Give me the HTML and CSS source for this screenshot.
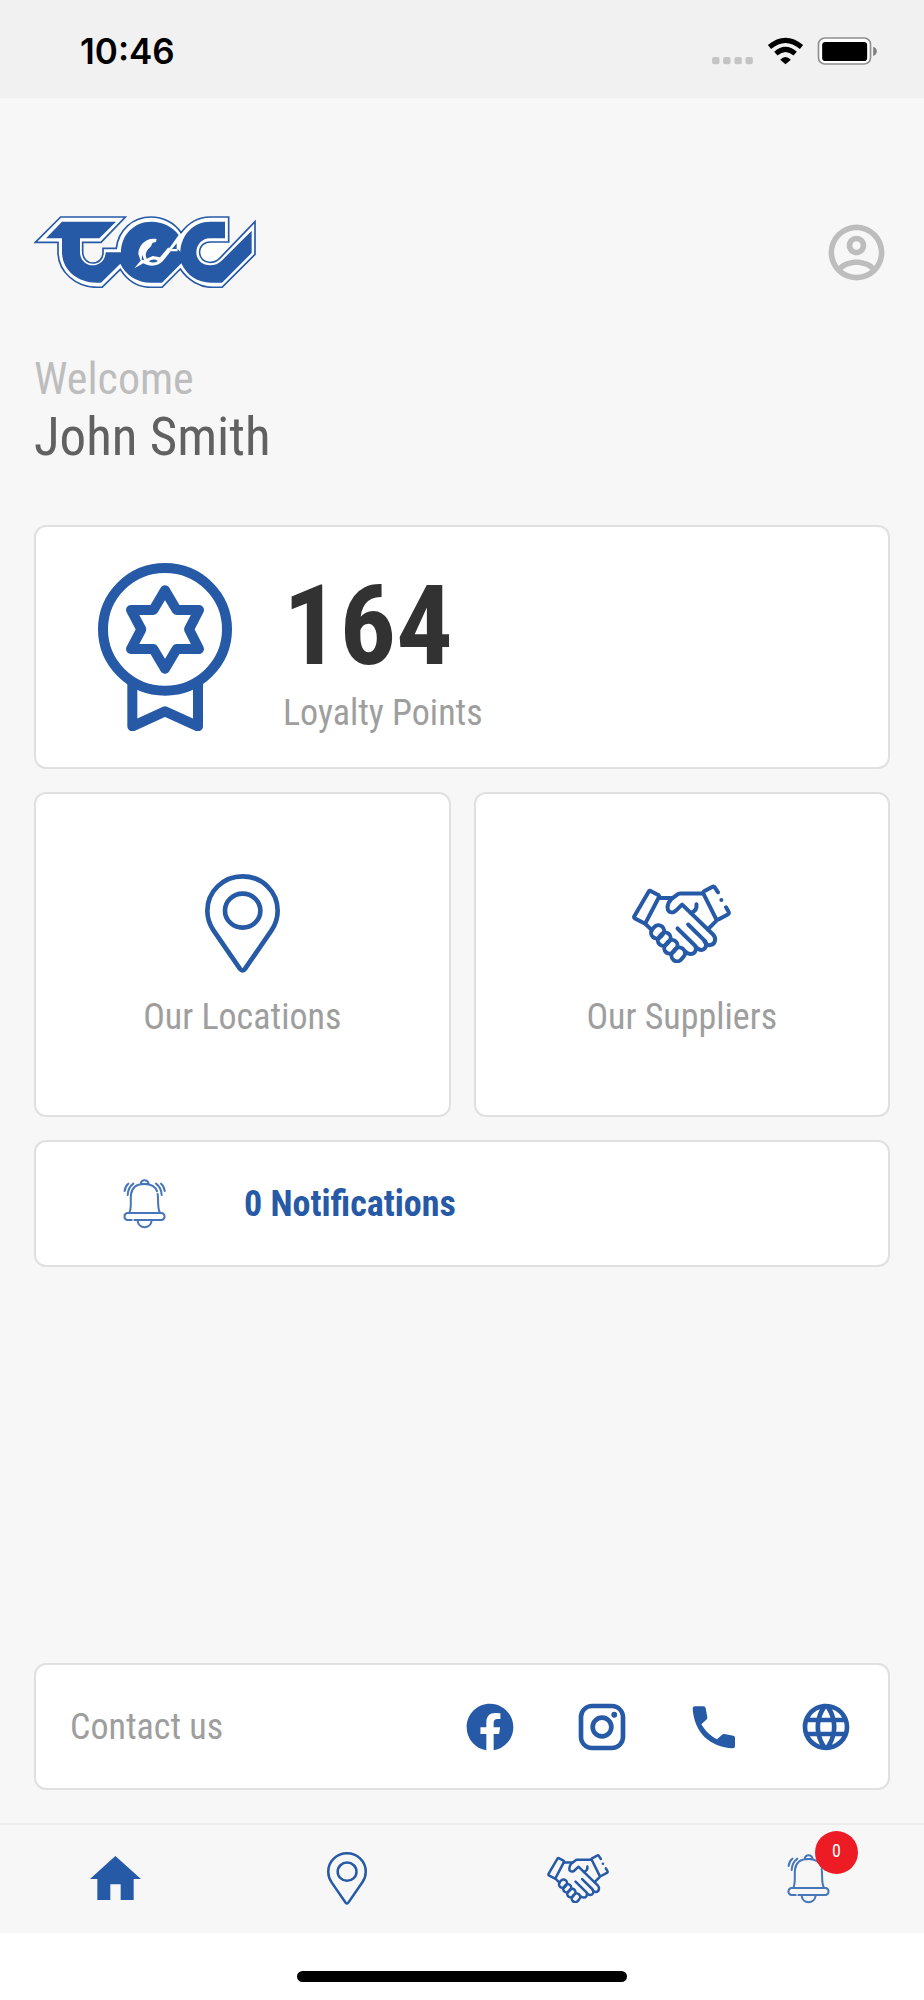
FILE: index.html
```html
<!DOCTYPE html>
<html lang="en">
<head>
<meta charset="utf-8">
<meta name="viewport" content="width=device-width, initial-scale=1">
<title>TEC Loyalty</title>
<link rel="stylesheet" href="styles.css">
</head>
<body>
<svg class="sprite" aria-hidden="true">
  <symbol id="pin" viewBox="0 0 225 297">
    <g fill="none" stroke="currentColor" stroke-width="14">
      <path d="M113 7C54 7 7 53 7 110C7 134 14 152 26 170L104 283Q113 295 121 283L199 170C211 152 218 134 218 110C218 53 171 7 113 7Z"/>
      <ellipse cx="113" cy="110" rx="53" ry="51"/>
    </g>
  </symbol>
  <symbol id="handshake" viewBox="215 106 298 236">
    <g fill="none" stroke="currentColor" stroke-width="12" stroke-linecap="round" stroke-linejoin="round">
      <path d="M266 127Q268 125 271 126L294 138Q298 141 296 145L257 220Q254 225 249 222L224 209Q220 206 222 202Z"/>
      <path d="M300 147H337M255 225L275 244"/>
      <path d="M427 134H360Q355 134 350 138L334 150Q322 162 322 176C322 188 330 192 339 190C350 187 356 174 366 167L459 257C470 268 466 287 450 289C443 290 438 286 433 278"/>
      <path d="M409 166C411 180 404 188 392 192"/>
      <path d="M474 130L464 115Q461 111 456 114L432 127Q428 130 430 134L468 210Q471 214 475 212L503 197Q508 194 506 189L498 175M468 217L444 241"/>
      <path d="M384 227L435 277C443 291 435 303 424 304C415 304 411 299 406 292M352 239L405 291C411 304 404 316 391 316Q382 315 376 309"/>
      <rect x="-21" y="-17" width="42" height="34" rx="17" transform="translate(292 249) rotate(-50)"/>
      <rect x="-21" y="-16" width="42" height="32" rx="16" transform="translate(312 271) rotate(-50)"/>
      <rect x="-22" y="-16" width="44" height="32" rx="16" transform="translate(332 294) rotate(-50)"/>
      <rect x="-22" y="-17" width="44" height="34" rx="17" transform="translate(354 317) rotate(-50)"/>
    </g>
    <circle cx="484" cy="153" r="6" fill="currentColor"/>
  </symbol>
  <symbol id="bell" viewBox="308 203 135 153">
    <g fill="none" stroke="currentColor" stroke-width="6" stroke-linecap="round">
      <path d="M364 221C366 206 385 206 388 221ZM331 305C337 290 333 268 335 252C338 230 353 221 375 221C396 221 409 230 413 243M415 251C418 275 414 292 421 305"/>
      <path d="M337 329H323A11 11 0 0 1 323 308H428A11 11 0 0 1 428 329H345"/>
      <path d="M355 331C357 357 394 357 397 331M316 242Q317 228 327 220M325 254Q326 232 342 220M427 254Q426 232 410 220M436 242Q435 228 425 220"/>
    </g>
  </symbol>
</svg>

<div class="statusbar">
  <time class="clock">10:46</time>
  <svg class="status-icons" viewBox="66 78 494 84" role="img" aria-label="Wi-Fi, battery full">
    <g fill="#c4c4c4">
      <rect x="66" y="138" width="22" height="22" rx="6"/><rect x="99" y="138" width="22" height="22" rx="6"/><rect x="133" y="138" width="22" height="22" rx="6"/><rect x="166" y="138" width="22" height="22" rx="6"/>
    </g>
    <path d="M286 160L270 146Q286 130 302 146Z"/>
    <path fill="none" stroke="#000" stroke-width="15" d="M257 128Q286 102 315 128M238 108Q286 68 334 108"/>
    <rect x="385" y="81" width="156" height="78" rx="19" fill="#fff" stroke="#8f8f8f" stroke-width="5"/>
    <rect x="396" y="93" width="135" height="57" rx="10"/>
    <path fill="#808080" d="M549 107Q560 111 560 121T549 135Z"/>
  </svg>
</div>

<main class="content">
  <header class="header">
    <svg class="logo" viewBox="44 48 666 216" role="img" aria-label="TEC">
      <path fill="#fff" stroke="#2659a6" stroke-width="5" d="M48 127L124 51H318L245 127H190V155C190 176 204 189 220 189C238 189 251 176 251 158V145H291C297 90 340 51 395 51C430 51 465 68 485 98C508 68 540 51 572 51H628V126H573C554 126 541 139 541 157C541 175 555 187 572 187C585 187 593 183 601 175L707 65V163L608 262H580C542 262 506 241 483 207L428 262H395C355 262 324 241 303 208L248 262H235C168 262 116 215 116 155V127Z"/>
      <path fill="#fff" d="M638 129H574C556 129 544 140 544 157C544 173 557 184 572 184C584 184 591 180 599 172Z"/>
      <path fill="#2659a6" d="M80 115L128 65H290L240 115H182V156C182 180 199 196 220 196C241 196 258 181 259 157H305C305 105 344 65 396 65C430 65 460 80 478 105L450 145H473L483 155C485 104 523 65 572 65H617V115H572C549 115 531 134 531 157C531 180 549 196 572 196C586 196 597 191 606 183L697 92V159L608 248H575C535 248 502 226 486 190L428 248H395C354 248 320 226 303 191L245 248H232C174 248 128 210 128 155V115Z"/>
      <path fill="#fff" d="M412 117C378 112 357 138 357 162L364 182L345 205L372 190C392 202 418 198 430 184L454 154H474L484 106L456 143H446L422 172L400 168L382 176C374 160 386 146 394 140L400 128L410 126Z"/>
      <path fill="#2659a6" d="M388 184Q402 174 416 183Q402 192 388 184ZM369 164L374 180L367 180ZM458 147L472 130V147Z"/>
    </svg>
    <button class="account" type="button" aria-label="My account">
      <svg viewBox="0 0 24 24"><path fill="currentColor" d="M12,2A10,10 0 0,0 2,12A10,10 0 0,0 12,22A10,10 0 0,0 22,12A10,10 0 0,0 12,2M7.07,18.28C7.5,17.38 10.12,16.5 12,16.5C13.88,16.5 16.5,17.38 16.93,18.28C15.57,19.36 13.86,20 12,20C10.14,20 8.43,19.36 7.07,18.28M18.36,16.83C16.93,15.09 13.46,14.5 12,14.5C10.54,14.5 7.07,15.09 5.64,16.83C4.62,15.5 4,13.82 4,12C4,7.59 7.59,4 12,4C16.41,4 20,7.59 20,12C20,13.82 19.38,15.5 18.36,16.83M12,6C10.06,6 8.5,7.56 8.5,9.5C8.5,11.44 10.06,13 12,13C13.94,13 15.5,11.44 15.5,9.5C15.5,7.56 13.94,6 12,6M12,11A1.5,1.5 0 0,1 10.5,9.5A1.5,1.5 0 0,1 12,8A1.5,1.5 0 0,1 13.5,9.5A1.5,1.5 0 0,1 12,11Z"/></svg>
    </button>
  </header>

  <section class="greeting">
    <p class="welcome">Welcome</p>
    <h1 class="name">John Smith</h1>
  </section>

  <div class="cards">
    <section class="card points">
      <svg class="medal" viewBox="0 0 402 504" aria-hidden="true">
        <g fill="none" stroke="currentColor" stroke-width="30" stroke-linejoin="round">
          <ellipse cx="201" cy="199" rx="186" ry="184"/>
          <path d="M201 82L236 141H303L273 199L303 258H236L201 317L166 258H99L130 199L99 141H166Z"/>
          <path d="M103 355V490L201 445L300 490V355"/>
        </g>
      </svg>
      <div class="points-text">
        <span class="points-value">164</span>
        <span class="label">Loyalty Points</span>
      </div>
    </section>

    <div class="tiles">
      <a class="card tile" href="#locations">
        <span class="tile-icon"><svg class="pin-large" aria-hidden="true"><use href="#pin"/></svg></span>
        <span class="label">Our Locations</span>
      </a>
      <a class="card tile" href="#suppliers">
        <span class="tile-icon"><svg class="handshake-large" aria-hidden="true"><use href="#handshake"/></svg></span>
        <span class="label">Our Suppliers</span>
      </a>
    </div>

    <a class="card notifications" href="#notifications">
      <svg class="bell" aria-hidden="true"><use href="#bell"/></svg>
      <span>0 Notifications</span>
    </a>
  </div>

  <section class="card contact">
    <span class="label">Contact us</span>
    <div class="contact-links">
      <a href="#facebook" aria-label="Facebook"><svg viewBox="0 0 24 24"><path d="M12 2.04C6.5 2.04 2 6.53 2 12.06C2 17.06 5.66 21.21 10.44 21.96V14.96H7.9V12.06H10.44V9.85C10.44 7.34 11.93 5.96 14.22 5.96C15.31 5.96 16.45 6.15 16.45 6.15V8.62H15.19C13.95 8.62 13.56 9.39 13.56 10.18V12.06H16.34L15.89 14.96H13.56V21.96A10 10 0 0 0 22 12.06C22 6.53 17.5 2.04 12 2.04Z"/></svg></a>
      <a href="#instagram" aria-label="Instagram"><svg viewBox="0 0 24 24"><path d="M7.8,2H16.2C19.4,2 22,4.6 22,7.8V16.2A5.8,5.8 0 0,1 16.2,22H7.8C4.6,22 2,19.4 2,16.2V7.8A5.8,5.8 0 0,1 7.8,2M7.6,4A3.6,3.6 0 0,0 4,7.6V16.4C4,18.39 5.61,20 7.6,20H16.4A3.6,3.6 0 0,0 20,16.4V7.6C20,5.61 18.39,4 16.4,4H7.6M17.25,5.5A1.25,1.25 0 0,1 18.5,6.75A1.25,1.25 0 0,1 17.25,8A1.25,1.25 0 0,1 16,6.75A1.25,1.25 0 0,1 17.25,5.5M12,7A5,5 0 0,1 17,12A5,5 0 0,1 12,17A5,5 0 0,1 7,12A5,5 0 0,1 12,7M12,9A3,3 0 0,0 9,12A3,3 0 0,0 12,15A3,3 0 0,0 15,12A3,3 0 0,0 12,9Z"/></svg></a>
      <a href="#phone" aria-label="Phone"><svg viewBox="740 146 168 168"><path d="M767 168H792Q798 168 799 174L804 201Q804 205 801 208L786 222C797 241 814 258 833 267L848 253Q851 250 855 251L882 256Q887 257 887 262V288Q887 294 881 294C811 291 764 246 760 174Q760 168 767 168Z"/></svg></a>
      <a href="#website" aria-label="Website"><svg viewBox="0 0 24 24"><path d="M16.36,14C16.44,13.34 16.5,12.68 16.5,12C16.5,11.32 16.44,10.66 16.36,10H19.74C19.9,10.64 20,11.31 20,12C20,12.69 19.9,13.36 19.74,14M14.59,19.56C15.19,18.45 15.65,17.25 15.97,16H18.92C17.96,17.65 16.43,18.93 14.59,19.56M14.34,14H9.66C9.56,13.34 9.5,12.68 9.5,12C9.5,11.32 9.56,10.65 9.66,10H14.34C14.43,10.65 14.5,11.32 14.5,12C14.5,12.68 14.43,13.34 14.34,14M12,19.96C11.17,18.76 10.5,17.43 10.09,16H13.91C13.5,17.43 12.83,18.76 12,19.96M8,8H5.08C6.03,6.34 7.57,5.06 9.4,4.44C8.8,5.55 8.35,6.75 8,8M5.08,16H8C8.35,17.25 8.8,18.45 9.4,19.56C7.57,18.93 6.03,17.65 5.08,16M4.26,14C4.1,13.36 4,12.69 4,12C4,11.31 4.1,10.64 4.26,10H7.64C7.56,10.66 7.5,11.32 7.5,12C7.5,12.68 7.56,13.34 7.64,14M12,4.03C12.83,5.23 13.5,6.57 13.91,8H10.09C10.5,6.57 11.17,5.23 12,4.03M18.92,8H15.97C15.65,6.75 15.19,5.55 14.59,4.44C16.43,5.07 17.96,6.34 18.92,8M12,2C6.47,2 2,6.5 2,12A10,10 0 0,0 12,22A10,10 0 0,0 22,12A10,10 0 0,0 12,2Z"/></svg></a>
    </div>
  </section>
</main>

<nav class="tabs" aria-label="Main">
  <a href="#home" aria-label="Home"><svg class="tab-home" viewBox="270 647 153 132"><path fill="currentColor" d="M346 647L423 716H401V779H362V732H331V779H292V716H270Z"/></svg></a>
  <a href="#locations" aria-label="Our Locations"><svg class="tab-pin"><use href="#pin"/></svg></a>
  <a href="#suppliers" aria-label="Our Suppliers"><svg class="tab-handshake"><use href="#handshake"/></svg></a>
  <a href="#notifications" aria-label="Notifications">
    <span class="bell-wrap"><svg class="bell"><use href="#bell"/></svg><span class="badge">0</span></span>
  </a>
</nav>
<div class="home-area"><div class="home-indicator"></div></div>
</body>
</html>
```
FILE: styles.css
```css
* {
  box-sizing: border-box;
}

body {
  margin: 0;
  min-height: 100vh;
  display: flex;
  flex-direction: column;
  background: #f7f7f7;
  color: #9e9e9e;
  font-family: "Roboto Condensed", "Liberation Sans Narrow", Roboto, sans-serif;
  font-size: 36px;
  line-height: 42px;
}

svg {
  display: block;
}

a {
  color: inherit;
  text-decoration: none;
}

.sprite {
  position: absolute;
  width: 0;
  height: 0;
}

.statusbar {
  display: flex;
  align-items: center;
  justify-content: space-between;
  height: 98px;
  padding: 3px 47px 0 80px;
  background: #f1f1f1;
  color: #000;
}

.clock {
  font-family: Inter, sans-serif;
  font-size: 35px;
  font-weight: 600;
}

.status-icons {
  width: 165px;
  height: 28px;
}

.content {
  flex: 1;
  display: flex;
  flex-direction: column;
  padding: 118px 34px 33px;
}

.header {
  display: flex;
  align-items: center;
  justify-content: space-between;
}

.logo {
  width: 222px;
  height: 72px;
}

.account {
  width: 67px;
  height: 67px;
  padding: 0;
  border: 0;
  background: none;
  color: #bdbdbd;
}

.greeting {
  margin: 65px 0 56px;
}

.welcome {
  margin: 0;
  color: #bdbdbd;
  font-size: 44px;
  line-height: 52px;
}

.name {
  margin: 0;
  color: #616161;
  font-size: 53px;
  font-weight: 400;
  line-height: 64px;
}

.cards {
  display: flex;
  flex-direction: column;
  gap: 23px;
}

.card {
  border: 2px solid #e0e0e0;
  border-radius: 12px;
  background: #fff;
}

.points {
  display: flex;
  gap: 51px;
  padding: 36px 62px 33px;
}

.medal {
  width: 134px;
  height: 168px;
  color: #2659a6;
}

.points-text {
  display: flex;
  flex-direction: column;
  gap: 10px;
  padding-top: 7px;
}

.points-value {
  color: #323232;
  font-size: 112px;
  font-weight: 700;
  line-height: 112px;
}

.tiles {
  display: grid;
  grid-template-columns: 1fr 1fr;
  gap: 23px;
}

.tile {
  display: flex;
  flex-direction: column;
  align-items: center;
  gap: 22px;
  padding: 78px 20px 77px;
}

.tile-icon {
  display: flex;
  align-items: center;
  height: 102px;
  color: #2659a6;
}

.pin-large {
  width: 75px;
  height: 99px;
}

.handshake-large {
  width: 99px;
  height: 79px;
}

.notifications {
  display: flex;
  align-items: center;
  gap: 77px;
  padding: 36px 86px;
  color: #2659a6;
  font-weight: 700;
}

.bell {
  width: 45px;
  height: 51px;
  color: #4675b8;
}

.contact {
  display: flex;
  align-items: center;
  justify-content: space-between;
  margin-top: auto;
  padding: 34px 34px 33px;
}

.contact-links {
  display: flex;
  gap: 56px;
}

.contact-links svg {
  width: 56px;
  height: 56px;
  fill: #2659a6;
}

.tabs {
  display: grid;
  grid-template-columns: repeat(4, 1fr);
  border-top: 2px solid #ebebeb;
}

.tabs a {
  display: flex;
  align-items: center;
  justify-content: center;
  height: 108px;
  padding-bottom: 2px;
  color: #2659a6;
}

.tab-home {
  width: 51px;
  height: 44px;
}

.tab-pin {
  width: 40px;
  height: 53px;
}

.tab-handshake {
  width: 62px;
  height: 49px;
}

.bell-wrap {
  position: relative;
}

.badge {
  position: absolute;
  top: -22px;
  left: 29px;
  width: 43px;
  height: 43px;
  border-radius: 50%;
  background: #ed1c24;
  color: #fff;
  font-size: 18px;
  line-height: 40px;
  text-align: center;
}

.home-area {
  display: flex;
  justify-content: center;
  padding: 38px 0 18px;
  background: #fff;
}

.home-indicator {
  width: 330px;
  height: 11px;
  border-radius: 6px;
  background: #000;
}
```
